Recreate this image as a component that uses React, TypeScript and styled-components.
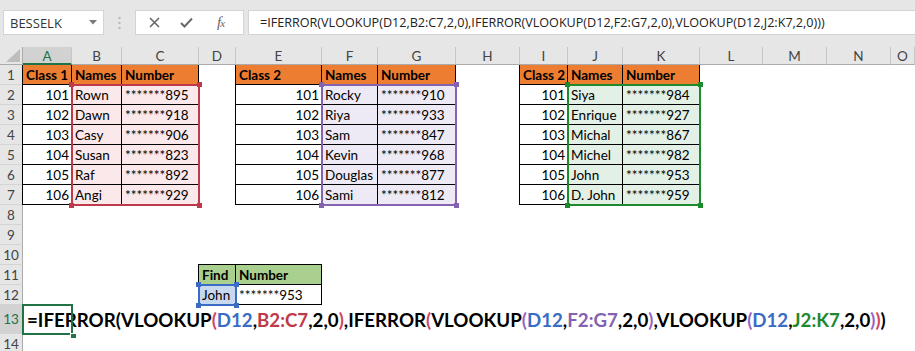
import React from "react";
import styled, { createGlobalStyle, css } from "styled-components";

const GlobalStyle = createGlobalStyle`
  html, body { margin: 0; padding: 0; background: #fff; overflow: hidden; }
  body { font-family: Lato, "Liberation Sans", sans-serif; }
  #root { width: 915px; height: 351px; overflow: hidden; }
`;

/* ---------- top bar ---------- */
const TopBar = styled.div`
  height: 47px;
  box-sizing: border-box;
  background: #e6e6e6;
  display: flex;
  align-items: flex-start;
  padding: 10px 0 0 3px;
`;

const NameBox = styled.div`
  width: 101px;
  height: 25px;
  box-sizing: border-box;
  background: #fff;
  border: 1px solid #d4d4d4;
  display: flex;
  align-items: center;
  justify-content: space-between;
  padding: 0 6px 0 6px;
  font: 13px "Open Sans", sans-serif;
  color: #333;
`;

const Grip = styled.div`
  width: 31px;
  height: 25px;
  display: flex;
  align-items: center;
  justify-content: center;
`;

const FxGroup = styled.div`
  width: 109px;
  height: 25px;
  box-sizing: border-box;
  background: #fff;
  border: 1px solid #d4d4d4;
  display: flex;
  align-items: center;
  padding-left: 13px;
  gap: 20px;
`;

const FxLabel = styled.span`
  font: italic 15px "Liberation Serif", serif;
  color: #666;
  margin-left: 4px;
  letter-spacing: -1px;
  & small { font-size: 11px; }
`;

const FormulaBox = styled.div`
  flex: 1;
  margin-left: 4px;
  height: 25px;
  box-sizing: border-box;
  background: #fff;
  border: 1px solid #d4d4d4;
  border-right: none;
  display: flex;
  align-items: center;
  padding-left: 11px;
  font: 12.6px "Open Sans", sans-serif;
  color: #222;
  white-space: nowrap;
`;

/* ---------- sheet ---------- */
const gridTemplate = css`
  display: grid;
  grid-template-columns: 23px 49px 50px 77px 37px 86px 56px 78px 64px 48px 55px 77px 63px 64px 64px 1fr;
  grid-template-rows: 18px repeat(12, 20px) 29px 20px;
`;

const SheetWrap = styled.div`
  position: relative;
`;

const SheetGrid = styled.div`
  ${gridTemplate}
  background: #fff;
`;

const OverlayGrid = styled.div`
  ${gridTemplate}
  position: absolute;
  inset: 0;
  pointer-events: none;
`;

const Corner = styled.div`
  position: relative;
  background: #e6e6e6;
  border-right: 1px solid #ababab;
  border-bottom: 1px solid #ababab;
  box-sizing: border-box;
  &::after {
    content: "";
    position: absolute;
    right: 2px;
    bottom: 2px;
    width: 14px;
    height: 13px;
    background: #bdbdbd;
    clip-path: polygon(100% 0, 100% 100%, 0 100%);
  }
`;

const ColHead = styled.div<{ $active?: boolean }>`
  box-sizing: border-box;
  display: flex;
  align-items: center;
  justify-content: center;
  background: ${(p) => (p.$active ? "#d2d2d2" : "#e6e6e6")};
  border-right: 1px solid #c6c6c6;
  border-bottom: ${(p) => (p.$active ? "2px solid #217346" : "1px solid #ababab")};
  color: ${(p) => (p.$active ? "#217346" : "#444")};
  font: 13.5px Lato, sans-serif;
  padding-top: 1px;
`;

const RowHead = styled.div<{ $active?: boolean }>`
  box-sizing: border-box;
  display: flex;
  align-items: center;
  justify-content: center;
  background: ${(p) => (p.$active ? "#d2d2d2" : "#e6e6e6")};
  border-right: 1px solid #ababab;
  border-bottom: 1px solid #d4d4d4;
  color: ${(p) => (p.$active ? "#217346" : "#444")};
  font: 13.5px Lato, sans-serif;
`;

type Edge = { left?: boolean; top?: boolean };

const Cell = styled.div<{
  $fill?: string;
  $right?: boolean;
  $bold?: boolean;
  $boxed?: boolean;
  $edge?: Edge;
}>`
  box-sizing: border-box;
  min-width: 0;
  display: flex;
  align-items: flex-end;
  justify-content: ${(p) => (p.$right ? "flex-end" : "flex-start")};
  padding: 0 2px 2px 3px;
  font: ${(p) => (p.$bold ? 700 : 400)} 13.5px/1 Lato, sans-serif;
  color: #000;
  white-space: nowrap;
  background: ${(p) => p.$fill ?? "transparent"};
  ${(p) =>
    p.$boxed &&
    css`
      border-right: 1px solid #000;
      border-bottom: 1px solid #000;
    `}
  ${(p) => {
    const s: string[] = [];
    if (p.$edge?.left) s.push("-1px 0 0 #000");
    if (p.$edge?.top) s.push("0 -1px 0 #000");
    if (p.$edge?.left && p.$edge?.top) s.push("-1px -1px 0 #000");
    return s.length ? css`box-shadow: ${s.join(", ")};` : "";
  }}
`;

const FormulaCell = styled.div`
  min-width: 0;
  display: flex;
  align-items: flex-end;
  padding: 0 0 4px 4px;
  font: 700 18.7px/1 Lato, sans-serif;
  color: #000;
  white-space: nowrap;
  overflow: visible;
`;

const Caret = styled.span`
  display: inline-block;
  width: 1px;
  height: 19px;
  background: #000;
  margin-left: 3px;
  align-self: center;
`;

const Tok = styled.span<{ $c?: string }>`
  color: ${(p) => p.$c ?? "inherit"};
`;

/* overlays: reference ranges and active cell */
const RangeFrame = styled.div<{ $color: string; $col: string; $row: string }>`
  position: relative;
  grid-column: ${(p) => p.$col};
  grid-row: ${(p) => p.$row};
  margin: -1px -1px -1px -1px;
  border: 2px solid ${(p) => p.$color};
`;

const Handle = styled.span<{ $color: string; $pos: "tl" | "tr" | "bl" | "br" }>`
  position: absolute;
  width: 5px;
  height: 5px;
  background: ${(p) => p.$color};
  ${(p) => (p.$pos[0] === "t" ? "top: -4px;" : "bottom: -4px;")}
  ${(p) => (p.$pos[1] === "l" ? "left: -4px;" : "right: -4px;")}
`;

const ActiveFrame = styled.div`
  position: relative;
  grid-column: 2 / 3;
  grid-row: 14 / 15;
  margin: -1px -1px -1px -1px;
  border: 2px solid #217346;
`;

const FillHandle = styled.span`
  position: absolute;
  right: -5px;
  bottom: -5px;
  width: 5px;
  height: 4px;
  background: #217346;
  border-left: 1px solid #fff;
  border-top: 1px solid #fff;
`;

/* ---------- data ---------- */
const COLS = "ABCDEFGHIJKLMNO".split("");
const ROWS = 14;

type Spec = {
  v: string;
  right?: boolean;
  bold?: boolean;
  fill?: string;
  boxed?: boolean;
  edge?: Edge;
};

const ORANGE = "#ED7D31";
const GREEN_HEAD = "#A9D08E";
const PINK = "#FBE8EA";
const LAVENDER = "#EEEAF5";
const MINT = "#E3F0E5";
const ICE = "#C8D8EE";

const RED = "#BE3A4B";
const BLUE = "#3B6CC5";
const PURPLE = "#8462B2";
const GREEN = "#1E8A2D";
const P1 = "#D0455E";
const P2 = "#9466C4";

const cells: Record<string, Spec> = {};

function table(
  col: number,
  row: number,
  head: string[],
  body: string[][],
  headFill: string,
  bodyFill: (string | undefined)[],
  topEdge = false
) {
  const all = [head, ...body];
  all.forEach((r, ri) => {
    r.forEach((v, ci) => {
      const key = COLS[col + ci] + (row + ri);
      cells[key] = {
        v,
        bold: ri === 0,
        right: ri > 0 && ci === 0 && head.length === 3,
        fill: ri === 0 ? headFill : bodyFill[ci],
        boxed: true,
        edge: { left: ci === 0, top: topEdge && ri === 0 },
      };
    });
  });
}

const stars = (n: string) => "*******" + n;

table(
  0,
  1,
  ["Class 1", "Names", "Number"],
  [
    ["101", "Rown", stars("895")],
    ["102", "Dawn", stars("918")],
    ["103", "Casy", stars("906")],
    ["104", "Susan", stars("823")],
    ["105", "Raf", stars("892")],
    ["106", "Angi", stars("929")],
  ],
  ORANGE,
  [undefined, PINK, PINK]
);
table(
  4,
  1,
  ["Class 2", "Names", "Number"],
  [
    ["101", "Rocky", stars("910")],
    ["102", "Riya", stars("933")],
    ["103", "Sam", stars("847")],
    ["104", "Kevin", stars("968")],
    ["105", "Douglas", stars("877")],
    ["106", "Sami", stars("812")],
  ],
  ORANGE,
  [undefined, LAVENDER, LAVENDER]
);
table(
  8,
  1,
  ["Class 2", "Names", "Number"],
  [
    ["101", "Siya", stars("984")],
    ["102", "Enrique", stars("927")],
    ["103", "Michal", stars("867")],
    ["104", "Michel", stars("982")],
    ["105", "John", stars("953")],
    ["106", "D. John", stars("959")],
  ],
  ORANGE,
  [undefined, MINT, MINT]
);
table(3, 11, ["Find", "Number"], [["John", stars("953")]], GREEN_HEAD, [ICE, undefined], true);

type T = [string, string?];
const FORMULA: T[] = [
  ["=IFERROR(VLOOKUP"],
  ["(", P1],
  ["D12", BLUE],
  [","],
  ["B2:C7", RED],
  [",2,0"],
  [")", P1],
  [",IFERROR"],
  ["(", P1],
  ["VLOOKUP"],
  ["(", P2],
  ["D12", BLUE],
  [","],
  ["F2:G7", PURPLE],
  [",2,0"],
  [")", P2],
  [",VLOOKUP"],
  ["(", P2],
  ["D12", BLUE],
  [","],
  ["J2:K7", GREEN],
  [",2,0"],
  [")", P2],
  [")", P1],
  [")"],
];
const FORMULA_TEXT = FORMULA.map((t) => t[0]).join("");

const ranges = [
  { color: RED, col: "3 / 5", row: "3 / 9" },
  { color: PURPLE, col: "7 / 9", row: "3 / 9" },
  { color: GREEN, col: "11 / 13", row: "3 / 9" },
  { color: BLUE, col: "5 / 6", row: "13 / 14" },
];

function Icons() {
  return (
    <>
      <svg width="11" height="11" viewBox="0 0 11 11">
        <path d="M1 1 L10 10 M10 1 L1 10" stroke="#6a6a6a" strokeWidth="1.6" fill="none" />
      </svg>
      <svg width="13" height="11" viewBox="0 0 13 11">
        <path d="M1 6 L4.5 9.5 L12 1.5" stroke="#6a6a6a" strokeWidth="2" fill="none" />
      </svg>
      <FxLabel>
        f<small>x</small>
      </FxLabel>
    </>
  );
}

export default function App() {
  const items: React.ReactNode[] = [];
  items.push(<Corner key="corner" />);
  COLS.forEach((c) =>
    items.push(
      <ColHead key={"h" + c} $active={c === "A"}>
        {c}
      </ColHead>
    )
  );
  for (let r = 1; r <= ROWS; r++) {
    items.push(
      <RowHead key={"r" + r} $active={r === 13}>
        {r}
      </RowHead>
    );
    COLS.forEach((c) => {
      const key = c + r;
      if (key === "A13") {
        items.push(
          <FormulaCell key={key}>
            {FORMULA.map((t, i) => (
              <Tok key={i} $c={t[1]}>
                {t[0]}
              </Tok>
            ))}
            <Caret />
          </FormulaCell>
        );
        return;
      }
      const s = cells[key];
      items.push(
        <Cell
          key={key}
          $fill={s?.fill}
          $right={s?.right}
          $bold={s?.bold}
          $boxed={s?.boxed}
          $edge={s?.edge}
        >
          {s?.v}
        </Cell>
      );
    });
  }

  return (
    <>
      <GlobalStyle />
      <TopBar>
        <NameBox>
          BESSELK
          <svg width="8" height="5" viewBox="0 0 8 5">
            <path d="M0 0 H8 L4 4.5 Z" fill="#7a7a7a" />
          </svg>
        </NameBox>
        <Grip>
          <svg width="3" height="12" viewBox="0 0 3 12">
            <rect x="0.5" y="0" width="2" height="2" fill="#b5b5b5" />
            <rect x="0.5" y="5" width="2" height="2" fill="#b5b5b5" />
            <rect x="0.5" y="10" width="2" height="2" fill="#b5b5b5" />
          </svg>
        </Grip>
        <FxGroup>
          <Icons />
        </FxGroup>
        <FormulaBox>{FORMULA_TEXT}</FormulaBox>
      </TopBar>
      <SheetWrap>
        <SheetGrid>{items}</SheetGrid>
        <OverlayGrid>
          {ranges.map((g, i) => (
            <RangeFrame key={i} $color={g.color} $col={g.col} $row={g.row}>
              <Handle $color={g.color} $pos="tl" />
              <Handle $color={g.color} $pos="tr" />
              <Handle $color={g.color} $pos="bl" />
              <Handle $color={g.color} $pos="br" />
            </RangeFrame>
          ))}
          <ActiveFrame>
            <FillHandle />
          </ActiveFrame>
        </OverlayGrid>
      </SheetWrap>
    </>
  );
}
